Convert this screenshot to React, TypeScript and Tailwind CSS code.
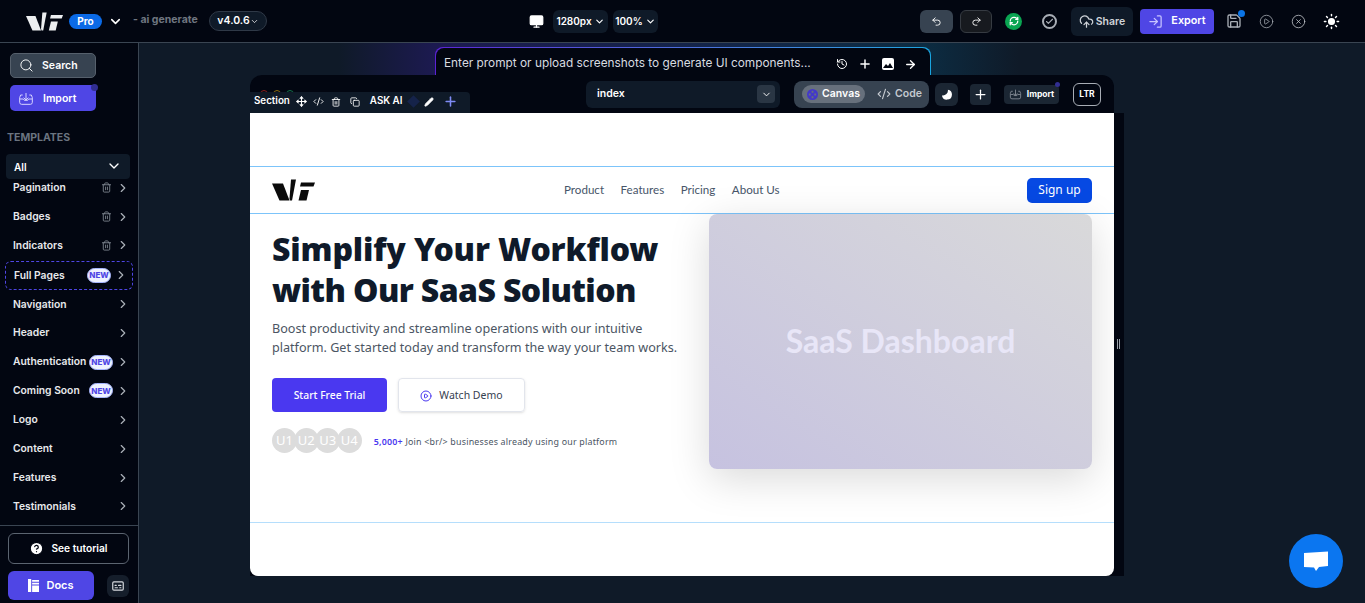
import {
  ArrowRight,
  Captions,
  Check,
  ChevronDown,
  ChevronRight,
  CirclePlay,
  CircleHelp,
  CircleX,
  CloudUpload,
  CodeXml,
  Copy,
  History,
  LogIn,
  Monitor,
  Move,
  Pencil,
  Plus,
  Redo2,
  RefreshCw,
  Save,
  Search,
  Sun,
  Trash2,
  Undo2,
} from 'lucide-react'

const uiFont = "font-['Inter','Liberation_Sans',sans-serif]"

const ViLogo = ({ className }: { className: string }) => (
  <svg viewBox="0 0 43 21" className={className} fill="currentColor">
    <path d="M0 4h11l6.500 17H7.500L0 4Z" />
    <path d="M19 0h5l-4 21h-2l-.500-2L19 0Z" />
    <path d="M29 3h14l-1.500 4H28L29 3Z" />
    <path d="M29 10.500h8L34.500 21h-8L29 10.500Z" />
  </svg>
)

const ImportIcon = ({ className }: { className: string }) => (
  <svg viewBox="0 0 24 24" className={className} fill="none" stroke="currentColor" strokeWidth="1.5">
    <path d="M7 6H4l-1.500 4v7a3 3 0 0 0 3 3h13a3 3 0 0 0 3-3v-7L20 6h-3" />
    <path d="M12 3v10" />
    <path d="m8.500 10 3.500 3.500 3.500-3.500" />
    <path d="M3 12h5l1.500 2h5L16 12h5" />
  </svg>
)

const NewBadge = () => (
  <span className="flex h-[15px] w-6 items-center justify-center rounded-full border border-[#a5b4fc] bg-[#eef2ff] text-[8px] font-extrabold text-[#4f46e5]">
    NEW
  </span>
)

const templates = [
  { name: 'Pagination', trash: true },
  { name: 'Badges', trash: true },
  { name: 'Indicators', trash: true },
  { name: 'Full Pages', badge: true, dashed: true },
  { name: 'Navigation' },
  { name: 'Header' },
  { name: 'Authentication', badge: true },
  { name: 'Coming Soon', badge: true },
  { name: 'Logo' },
  { name: 'Content' },
  { name: 'Features' },
  { name: 'Testimonials' },
]

const Sidebar = () => (
  <aside className="flex w-[139px] shrink-0 flex-col border-r border-[#3a4552] bg-[#020611]">
    <div className="flex flex-col gap-[7px] px-2.5 pt-[10px]">
      <button className="flex h-[25px] w-[86px] items-center gap-[8px] rounded-[5px] border border-[#56606c] bg-[#374351] pl-2 text-[10.500px] font-semibold text-white">
        <Search size={15} strokeWidth={1.5} />
        Search
      </button>
      <div className="relative">
        <button className="flex h-[26px] w-[86px] items-center gap-[9px] rounded-[5px] bg-[#4f46e5] pl-2 pt-[1px] text-[10.500px] font-semibold text-white">
          <ImportIcon className="size-[16px] text-[#d6d3ff]" />
          Import
        </button>
        <span className="absolute left-[81px] top-[-1px] size-[7px] rounded-full bg-[#312e91]" />
      </div>
    </div>
    <div className="px-[7px] pt-[19px] text-[10.500px] font-bold text-[#6b7480]">TEMPLATES</div>
    <div className="ml-1.5 mr-2 mt-[8px] flex h-[25px] items-center justify-between rounded bg-[#0f1a28] pl-2 pr-2 text-[10px] font-semibold text-white">
      <span className="pt-[2px]">All</span>
      <ChevronDown size={16} />
    </div>
    <div className="-mt-[5.500px] flex flex-1 flex-col">
      {templates.map((t) => (
        <div
          key={t.name}
          className={
            t.dashed
              ? 'mx-[5px] mt-[1px] flex h-[28.900px] items-center rounded-md border border-dashed border-[#4f46e5] pl-2 pr-[4px] text-[10.300px] font-semibold text-[#e7e9ec]'
              : 'flex h-[28.900px] items-center pl-[13px] pr-[8px] text-[10.300px] font-semibold text-[#e7e9ec]'
          }
        >
          <span className="flex-1 whitespace-nowrap">{t.name}</span>
          {t.trash && <Trash2 size={11} className="mr-[4px] text-[#7d848e]" />}
          {t.badge && (
            <span className="mr-[3px]">
              <NewBadge />
            </span>
          )}
          <ChevronRight size={14} className="text-[#aab0b8]" />
        </div>
      ))}
    </div>
    <div className="flex flex-col gap-[7px] border-t border-[#3a4552] pb-[3px] pl-2 pr-[9px] pt-[7px]">
      <button className="flex h-[31px] items-center justify-center gap-[7px] rounded-md border border-[#5b6470] text-[10.200px] font-semibold text-white">
        <CircleHelp size={15} fill="white" stroke="#020611" />
        See tutorial
      </button>
      <div className="flex items-center justify-between">
        <button className="flex h-[29px] w-[86px] items-center justify-center gap-[7px] rounded-md bg-[#4f46e5] text-[11px] font-semibold text-white">
          <svg viewBox="0 0 12 14" className="h-[13px] w-[11px]" fill="white">
            <path d="M0 0h3.500v14H0zM4.500 1H12v2H4.500zM4.500 4H12v2H4.500zM4.500 7H12v7H4.500z" />
          </svg>
          Docs
        </button>
        <span className="flex size-[22px] items-center justify-center rounded-md bg-[#151e2b] text-[#d7dadf]">
          <Captions size={14} />
        </span>
      </div>
    </div>
  </aside>
)

const TopBar = () => (
  <header className="flex h-[43px] shrink-0 items-center border-b border-[#3a4552] bg-[#020611] text-white">
    <ViLogo className="ml-[26px] h-[19px] w-[37px] text-[#eceef0]" />
    <span className="ml-[6px] flex h-[15px] w-[33px] items-center justify-center rounded-full bg-[#0b6ae6] text-[10px] font-bold">Pro</span>
    <ChevronDown size={15} strokeWidth={2.5} className="ml-[6px]" />
    <span className="ml-[10px] w-[66px] pb-[2px] text-[10.500px] font-bold whitespace-nowrap text-[#6f7680]">- ai generate</span>
    <span className="ml-[10px] flex h-[20px] w-[58px] items-center justify-center rounded-full border border-[#2f3947] bg-[#0f1a28] text-[10.500px] font-semibold">
      v4.0.6
      <ChevronDown size={9} />
    </span>
    <Monitor size={15} className="ml-[262px]" fill="white" />
    <span className="ml-[9px] flex h-[23px] w-[55px] items-center justify-center gap-[2px] rounded-md bg-[#0f1a28] text-[10px] font-semibold">
      1280px
      <ChevronDown size={11} strokeWidth={2.5} />
    </span>
    <span className="ml-[5px] flex h-[23px] w-[45px] items-center justify-center gap-[2px] rounded-md bg-[#0f1a28] text-[10px] font-semibold">
      100%
      <ChevronDown size={11} strokeWidth={2.5} />
    </span>
    <span className="ml-[262px] flex h-[23px] w-[33px] items-center justify-center rounded-md bg-[#374351]">
      <Undo2 size={11} />
    </span>
    <span className="ml-[7px] flex h-[23px] w-[32px] items-center justify-center rounded-md border border-[#363b42] bg-[#171a1f]">
      <Redo2 size={11} />
    </span>
    <span className="ml-[13px] flex size-[17px] items-center justify-center rounded-full bg-[#0aa552]">
      <RefreshCw size={10} strokeWidth={3} />
    </span>
    <span className="ml-[20px] flex size-[15px] items-center justify-center rounded-full border-2 border-[#a8adb5] text-[#a8adb5]">
      <Check size={9} strokeWidth={3} />
    </span>
    <span className="ml-[14px] flex h-[29px] w-[62px] items-center justify-center gap-[2px] rounded-md bg-[#0f1a28] text-[10.500px] font-semibold text-[#cfd3d8]">
      <CloudUpload size={15} />
      <span className="pt-[1px]">Share</span>
    </span>
    <span className="ml-[7px] flex h-[25px] w-[74px] items-center justify-center gap-[8px] rounded bg-[#4f46e5] text-[10.800px] font-semibold">
      <LogIn size={15} className="text-[#c7c4ff]" />
      <span className="pt-[1px]">Export</span>
    </span>
    <span className="relative ml-[12px] text-[#a8adb5]">
      <Save size={16} />
      <span className="absolute right-[-3px] top-[-3px] size-[7px] rounded-full bg-[#0b74e6]" />
    </span>
    <CirclePlay size={15} strokeWidth={1.25} className="ml-[17px] text-[#a8adb5]" />
    <CircleX size={15} strokeWidth={1.25} className="ml-[17px] text-[#c4c8cd]" />
    <Sun size={17} fill="white" className="ml-[17px]" />
  </header>
)

const CanvasToolbar = () => (
  <div className="flex h-[38px] w-[864px] shrink-0 items-center rounded-t-xl bg-[#020611] text-white">
    <div className="ml-[336px] flex h-[27px] w-[194px] items-center justify-between rounded-md bg-[#0f1a28] pl-[11px] pr-[5px] text-[10.500px] font-semibold">
      index
      <span className="flex size-[18px] items-center justify-center rounded-sm bg-[#2a3644]">
        <ChevronDown size={11} />
      </span>
    </div>
    <div className="ml-[14px] flex h-[27px] w-[135px] items-center rounded-lg bg-[#374351] pl-2 text-[10.500px] font-semibold">
      <span className="flex h-[18px] w-[63px] items-center justify-center gap-[4px] rounded-full bg-[#67707c]">
        <svg viewBox="0 0 12 12" className="size-[11px]" fill="#4338ca">
          <path
            fillRule="evenodd"
            d="M6 0a6 6 0 1 1 0 12A6 6 0 0 1 6 0ZM5 2v2h2V2H5ZM2 5v2h2V5H2Zm6 0v2h2V5H8ZM5 8v2h2V8H5Z"
          />
        </svg>
        Canvas
      </span>
      <span className="ml-[12px] flex items-center gap-[4px] text-[#c5cad0]">
        <CodeXml size={14} />
        Code
      </span>
    </div>
    <span className="ml-[6px] flex size-[23px] items-center justify-center rounded-md bg-[#1b2633]">
      <svg viewBox="0 0 12 12" className="size-[11px]" fill="white">
        <path d="M1 7A5.500 5.500 0 1 0 7.500 .7 5.500 5.500 0 0 1 1 7Z" />
      </svg>
    </span>
    <span className="ml-[12px] flex size-[21px] items-center justify-center rounded bg-[#1b2633]">
      <Plus size={15} />
    </span>
    <span className="relative ml-[13px] flex h-[19px] w-[55px] items-center justify-center gap-[5px] rounded-sm bg-[#1b2633] text-[8.500px] font-bold">
      <ImportIcon className="size-[13px] text-[#8c939c]" />
      Import
      <span className="absolute right-[-1px] top-[-3px] size-[5px] rounded-full bg-[#312e91]" />
    </span>
    <span className="ml-[14px] flex h-[23px] w-[28px] items-center justify-center rounded-md border border-[#a8adb5] text-[8.500px] font-bold">LTR</span>
  </div>
)

const SectionToolbar = () => (
  <div className="absolute left-0 top-[17px] flex h-[21px] w-[220px] items-center gap-[6px] rounded-tr bg-[#0f1a28] pb-[2px] pl-[4px] text-[9.800px] font-semibold text-white">
    Section
    <Move size={11} strokeWidth={2.5} />
    <CodeXml size={11} />
    <Trash2 size={10} className="ml-[1px]" />
    <Copy size={10} className="ml-[3px]" />
    <span className="ml-[4px]">ASK AI</span>
    <span className="ml-[1px] size-[9px] rotate-45 bg-[#15234a]" />
    <Pencil size={10} fill="white" />
    <Plus size={15} strokeWidth={2.5} className="ml-[3px] text-[#7f8cf5]" />
  </div>
)

const Preview = () => (
  <div className="flex h-[463px] w-[864px] flex-col overflow-hidden rounded-b-lg bg-white">
    <div className="h-[53px] shrink-0" />
    <nav className="flex h-[48px] shrink-0 items-center border-y border-[#7cc4fa] pl-[22px] pr-[22px]">
      <ViLogo className="h-[22px] w-[43px] text-[#0b0b0b]" />
      <div className="ml-[249px] flex gap-[16.500px] font-['Lato',sans-serif] text-[11.600px] text-[#475569]">
        <span>Product</span>
        <span>Features</span>
        <span>Pricing</span>
        <span>About Us</span>
      </div>
      <button className="ml-auto flex h-[25px] w-[65px] items-center justify-center rounded-[5px] bg-[#0649e3] font-['Noto_Sans',sans-serif] text-[12px] text-white">
        Sign up
      </button>
    </nav>
    <section className="flex h-[309px] shrink-0 justify-between border-b border-[#b5defc] pl-[22px] pr-[22px]">
      <div>
        <h1 className="mt-[14px] font-['Noto_Sans',sans-serif] text-[32px] leading-[41px] font-black whitespace-nowrap text-[#0f1a2a]">
          <span className="tracking-[-0.150px]">Simplify Your Workflow</span>
          <br />
          <span className="tracking-[-0.600px]">with Our SaaS Solution</span>
        </h1>
        <p className="mt-[9px] font-['Noto_Sans',sans-serif] text-[12.600px] leading-[19px] text-[#4b5563]">
          Boost productivity and streamline operations with our intuitive
          <br />
          platform. Get started today and transform the way your team works.
        </p>
        <div className="mt-[21px] flex gap-[11px] font-['Noto_Sans',sans-serif] text-[10.500px]">
          <button className="flex h-[34px] w-[115px] items-center justify-center rounded bg-[#4a38f0] pt-[1px] text-[10.300px] font-medium text-white">Start Free Trial</button>
          <button className="flex h-[34px] w-[127px] items-center justify-center gap-[7px] rounded border-[1.500px] border-[#e2e5ec] pt-[1px] text-[#374151] shadow-sm">
            <CirclePlay size={12} className="text-[#4a38f0]" />
            Watch Demo
          </button>
        </div>
        <div className="mt-[16px] flex items-center font-['Noto_Sans',sans-serif]">
          <div className="flex -space-x-[3.400px] text-[13px] text-white">
            <span className="flex size-[25px] items-center justify-center rounded-full bg-[#dcdcdc]">U1</span>
            <span className="flex size-[25px] items-center justify-center rounded-full bg-[#dcdcdc]">U2</span>
            <span className="flex size-[25px] items-center justify-center rounded-full bg-[#dcdcdc]">U3</span>
            <span className="flex size-[25px] items-center justify-center rounded-full bg-[#dcdcdc]">U4</span>
          </div>
          <span className="ml-[12px] pt-[2px] text-[8.900px] tracking-[0.2px] text-[#4b5563]">
            <span className="font-semibold text-[#4a38f0]">5,000+</span> Join &lt;br/&gt; businesses already using our platform
          </span>
        </div>
      </div>
      <div className="flex h-[255px] w-[383px] items-center justify-center rounded-lg bg-gradient-to-bl from-[#d9d9da] to-[#c6c2e0] pb-[2px] font-['Lato',sans-serif] text-[32px] font-bold text-[#e8e6f7] shadow-[0_10px_40px_rgba(0,0,0,0.15)]">
        SaaS Dashboard
      </div>
    </section>
  </div>
)

const App = () => {
  return (
    <div className={`flex h-[603px] w-[1365px] flex-col overflow-hidden bg-[#0f1a28] ${uiFont}`}>
      <TopBar />
      <div className="flex min-h-0 flex-1">
        <Sidebar />
        <main className="relative flex min-w-0 flex-1 flex-col pl-[111px]">
          {/* glow behind the prompt bar */}
          <div className="absolute left-[200px] top-0 h-[32px] w-[680px] bg-[linear-gradient(90deg,transparent,#1c1a50_14%,#0c2c42_86%,transparent)]" />
          <div className="relative ml-[185px] mt-[4px] h-[28px] w-[496px] shrink-0 rounded-t-lg bg-gradient-to-r from-[#5b21d6] to-[#19a5e0] px-[1px] pt-[1px]">
            <div className="flex h-full items-center rounded-t-lg bg-[#020611] pl-[8px] pt-[5px] text-[11.850px] text-[#d8dbe0]">
              <span className="flex-1 whitespace-nowrap">Enter prompt or upload screenshots to generate UI components...</span>
              <span className="mr-[13px] flex items-center gap-[10px] text-white">
                <History size={12} />
                <Plus size={14} strokeWidth={2.5} />
                <svg viewBox="0 0 12 12" className="size-[12px]">
                  <rect width="12" height="12" rx="2" fill="white" />
                  <path d="M1 10 4 6l2 2 2-3 3 5H1Z" fill="#020611" />
                </svg>
                <ArrowRight size={13} strokeWidth={2.5} />
              </span>
            </div>
          </div>
          <div className="relative flex h-[501px] w-[874px] flex-col">
            <CanvasToolbar />
            {/* window dots, mostly hidden under the section bar */}
            <div className="absolute left-[10px] top-[15px] flex gap-[5px]">
              <span className="size-[8px] rounded-full border border-[#8b1f1f]" />
              <span className="size-[8px] rounded-full border border-[#8a6d12]" />
              <span className="size-[8px] rounded-full border border-[#12714a]" />
            </div>
            <SectionToolbar />
            <div className="flex bg-[#020611]">
              <Preview />
              <span className="w-[10px]" />
            </div>
            <span className="absolute left-[867px] top-[264px] h-[10px] w-[3px] border-x border-[#9aa1aa]" />
          </div>
          <span className="absolute right-[22px] top-[491px] flex size-[54px] items-center justify-center rounded-full bg-[#0b76f0]">
            <svg viewBox="0 0 26 22" className="h-[22px] w-[26px]" fill="white">
              <path d="M1 3 25 1.500 25 16 16 17 13 21 11 17.500 1 17Z" />
            </svg>
          </span>
        </main>
      </div>
    </div>
  )
}

export default App
